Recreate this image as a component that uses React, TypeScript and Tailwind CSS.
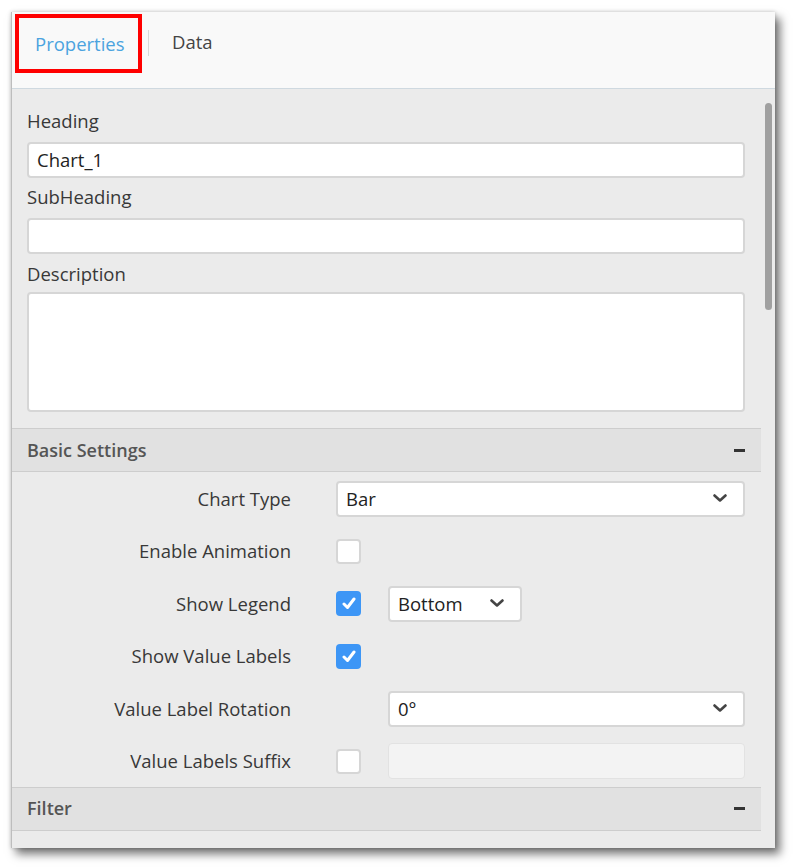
import React from "react";

const font = { fontFamily: '"Open Sans", "Noto Sans", sans-serif' };

function Chevron() {
    return (
        <svg width="14" height="9" viewBox="0 0 14 9" className="shrink-0">
            <path d="M1.5 1.5 L7 6.5 L12.5 1.5" fill="none" stroke="#444" strokeWidth="2.6" strokeLinecap="round" strokeLinejoin="round"/>
        </svg>
    )
}

function Select({value, className}: {value: string, className: string}){
    return (
        <div className={"h-[36px] bg-white border-2 border-[#d6d6d6] rounded-[4px] flex items-center justify-between pl-[8px] pr-[16px] text-[18.5px] text-[#222] " + className}>
            <span>{value}</span>
            <Chevron/>
        </div>
    )
}

function Check({checked}: {checked?: boolean}){
    if(checked){
        return (
            <div className="w-[25px] h-[25px] rounded-[4px] bg-[#3d96f6] flex items-center justify-center shrink-0">
                <svg width="14" height="13" viewBox="0 0 14 13">
                    <path d="M2 7 L5.5 10.5 L12 2" fill="none" stroke="white" strokeWidth="3" strokeLinecap="round" strokeLinejoin="round"/>
                </svg>
            </div>
        )
    }
    return <div className="w-[25px] h-[25px] rounded-[4px] bg-white border-2 border-[#d6d6d6] shrink-0"/>
}

function Row({label, children}: {label: string, children: React.ReactNode}){
    return (
        <div className="h-[35px] flex items-center">
            <div className="w-[279px] text-right text-[18.5px] text-[#383838] whitespace-nowrap">{label}</div>
            <div className="flex-1 flex items-center pl-[45px] pr-[16px]">
                {children}
            </div>
        </div>
    )
}

function SectionHeader({title}: {title: string}){
    return (
        <div className="h-[44px] bg-[#e1e1e1] border-y border-[#cdcdcd] flex items-center justify-between pl-[15px] pr-[16px]">
            <span className="text-[18px] font-semibold text-[#555]">{title}</span>
            <span className="w-[11px] h-[3px] bg-[#333]"/>
        </div>
    )
}

export default function App(){
    return (
        <div className="w-[795px] h-[867px] bg-white pt-[12px] pl-[11px]" style={font}>
            <div className="w-[764px] h-[836px] flex flex-col overflow-hidden border-l border-[#bdbdbd] shadow-[0_0_4px_rgba(0,0,0,0.2),5px_6px_9px_rgba(0,0,0,0.55)]">
                <div className="h-[77px] shrink-0 bg-[#f9f9f9] border-b border-[#cfd9e0] flex items-start">
                    <div className="ml-[3px] mt-[2px] w-[127px] h-[59px] border-4 border-[#ff0000] flex items-center pl-[16px] text-[18.5px] text-[#4ba3df]">
                        Properties
                    </div>
                    <div className="ml-[6px] mt-[18px] w-px h-[26px] bg-[#d8d8d8]"/>
                    <div className="ml-[23px] mt-[17px] text-[18.5px] text-[#444] leading-[26px]">Data</div>
                </div>
                <div className="flex-1 bg-[#ebebeb] flex min-h-0">
                    <div className="flex-1 min-w-0">
                        <div className="pt-[20px] pl-[15px] pr-[16px] pb-[16px] flex flex-col text-[18.5px] text-[#383838]">
                            <div className="leading-[24px]">Heading</div>
                            <div className="mt-[9px] h-[36px] bg-white border-2 border-[#d6d6d6] rounded-[4px] flex items-center pl-[8px] text-[#222]">Chart_1</div>
                            <div className="mt-[7px] leading-[24px]">SubHeading</div>
                            <div className="mt-[9px] h-[36px] bg-white border-2 border-[#d6d6d6] rounded-[4px]"/>
                            <div className="mt-[8px] leading-[24px]">Description</div>
                            <div className="mt-[6px] h-[120px] bg-white border-2 border-[#d6d6d6] rounded-[4px]"/>
                        </div>
                        <SectionHeader title="Basic Settings"/>
                        <div className="pt-[9px] pb-[8px] flex flex-col gap-[17.5px]">
                            <Row label="Chart Type">
                                <Select value="Bar" className="flex-1"/>
                            </Row>
                            <Row label="Enable Animation">
                                <Check/>
                            </Row>
                            <Row label="Show Legend">
                                <Check checked/>
                                <Select value="Bottom" className="ml-[27px] w-[134px]"/>
                            </Row>
                            <Row label="Show Value Labels">
                                <Check checked/>
                            </Row>
                            <Row label="Value Label Rotation">
                                <Select value="0°" className="ml-[52px] flex-1"/>
                            </Row>
                            <Row label="Value Labels Suffix">
                                <Check/>
                                <div className="ml-[27px] flex-1 h-[36px] bg-[#f3f3f3] border border-[#e2e2e2] rounded-[4px]"/>
                            </Row>
                        </div>
                        <SectionHeader title="Filter"/>
                    </div>
                    <div className="w-[14px] shrink-0 pt-[14px] pl-[4px]">
                        <div className="w-[7px] h-[207px] rounded-full bg-[#a0a0a0]"/>
                    </div>
                </div>
            </div>
        </div>
    )
}
